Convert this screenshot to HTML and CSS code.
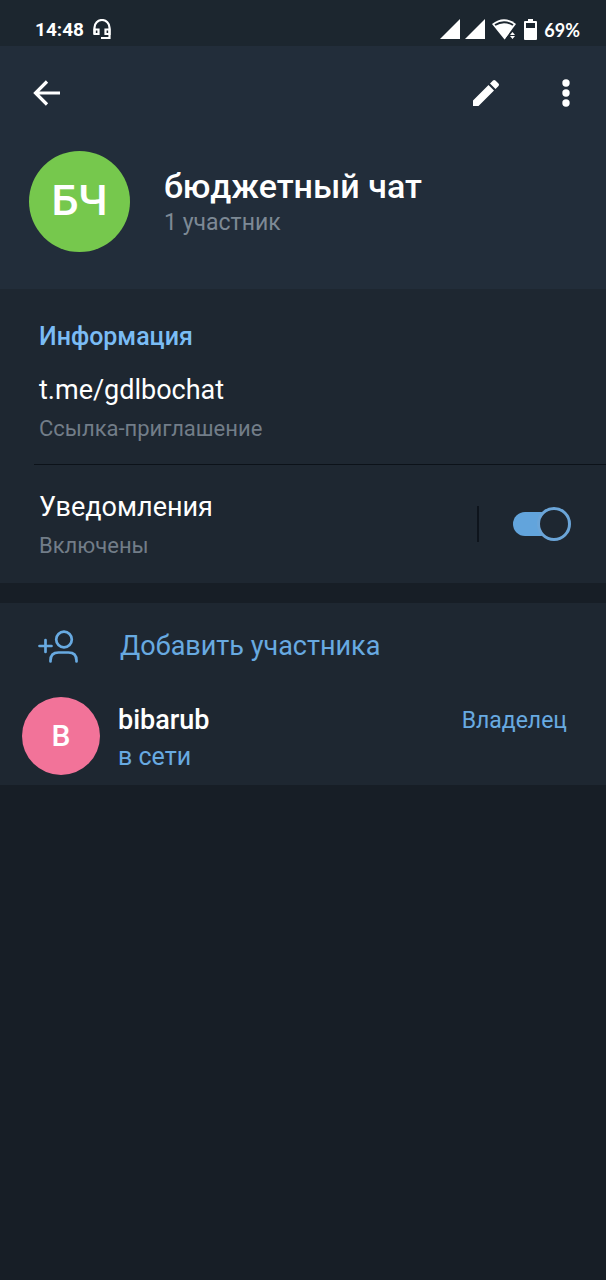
FILE: index.html
```html
<!DOCTYPE html>
<html lang="ru">
<head>
<meta charset="utf-8">
<meta name="viewport" content="width=device-width, initial-scale=1">
<title>бюджетный чат</title>
<link rel="stylesheet" href="styles.css">
</head>
<body>
<div class="status-bar">
  <span class="clock">14:48</span>
  <svg class="headset" width="18" height="21" viewBox="0 0 18 21" fill="none" stroke="#fff" stroke-width="2.200" aria-hidden="true">
    <path d="M1.500 15V8.500a7.300 7.300 0 0 1 15 0v10.500H8"/>
    <path d="M1.500 10.500h4v4.500h-4zM16.500 10.500h-4v4.500h4z"/>
  </svg>
  <div class="indicators">
    <svg width="20" height="20" viewBox="0 0 20 20" fill="#fff" aria-hidden="true"><path d="M0 20L20 0v20z"/></svg>
    <svg width="20" height="20" viewBox="0 0 20 20" fill="#fff" aria-hidden="true"><path d="M0 20L20 0v20z"/></svg>
    <svg class="wifi" width="25" height="21" viewBox="0 0 25 21" aria-hidden="true">
      <path d="M0 5Q12 -4.500 24 5L12.500 20.500z" fill="#fff"/>
      <path d="M3 6Q12 .5 21 6" fill="none" stroke="#1c262f" stroke-width="2"/>
      <path d="M17.500 13h8v8h-8z" fill="#1c262f"/>
      <path d="M12 13h6L12.500 20.500z" fill="#fff"/>
      <path d="M20.500 13l2.500 3h-5zM20.500 20l2.500-3h-5z" fill="#fff"/>
    </svg>
    <svg class="battery" width="13" height="21" viewBox="0 0 13 21" aria-hidden="true">
      <path d="M4 0h5v2h3q1 0 1 1v17q0 1-1 1H1q-1 0-1-1V3q0-1 1-1h3z" fill="#fff"/>
      <path d="M2 4h9v5H2z" fill="#1c262f"/>
    </svg>
    <span class="charge">69%</span>
  </div>
</div>

<header class="header">
  <div class="toolbar">
    <button class="icon-button" type="button" aria-label="Назад">
      <svg width="28" height="26" viewBox="0 0 28 26" fill="none" stroke="#fff" stroke-width="3.200" aria-hidden="true"><path d="M27 13H3M14 1.500L2.500 13L14 24.500"/></svg>
    </button>
    <button class="icon-button edit" type="button" aria-label="Изменить">
      <svg width="28" height="28" viewBox="0 0 28 28" fill="#fff" aria-hidden="true"><path d="M1 21.500L16.500 6l5.500 5.500L6.500 27H1zM18 4.500l3-3q1.200-1.200 2.400 0l3.100 3.100q1.200 1.200 0 2.400l-3 3z"/></svg>
    </button>
    <button class="icon-button" type="button" aria-label="Меню">
      <svg width="8" height="28" viewBox="0 0 8 28" fill="#fff" aria-hidden="true"><circle cx="4" cy="4" r="3.700"/><circle cx="4" cy="14" r="3.700"/><circle cx="4" cy="24" r="3.700"/></svg>
    </button>
  </div>
  <div class="profile">
    <div class="avatar avatar-chat">БЧ</div>
    <div class="profile-text">
      <h1 class="title">бюджетный чат</h1>
      <p class="subtitle">1 участник</p>
    </div>
  </div>
</header>

<main>
  <section class="panel">
    <h2 class="heading">Информация</h2>
    <div class="invite">
      <a class="value" href="#invite">t.me/gdlbochat</a>
      <p class="hint">Ссылка-приглашение</p>
    </div>
    <div class="notifications">
      <label class="notifications-text" for="notify">
        <span class="value">Уведомления</span>
        <span class="hint">Включены</span>
      </label>
      <input class="switch" id="notify" type="checkbox" role="switch" checked>
    </div>
  </section>

  <section class="panel members">
    <button class="add-member" type="button">
      <svg width="41" height="33" viewBox="0 0 41 33" fill="none" stroke="#68aae1" stroke-width="2.700" stroke-linecap="round" aria-hidden="true">
        <path d="M1.500 16h12M7.500 10v12"/>
        <circle cx="26" cy="9.500" r="7.800"/>
        <path d="M12.500 31.500v-1q0-8 8-8h10q8 0 8 8v1"/>
      </svg>
      <span>Добавить участника</span>
    </button>
    <button class="member" type="button">
      <span class="avatar avatar-member">B</span>
      <span class="member-text">
        <span class="member-name">bibarub</span>
        <span class="member-status">в сети</span>
      </span>
      <span class="role">Владелец</span>
    </button>
  </section>
</main>
</body>
</html>
```
FILE: styles.css
```css
* {
  box-sizing: border-box;
}

body {
  margin: 0;
  min-height: 100vh;
  background: #171e26;
  color: #fff;
  font-family: Roboto, "Noto Sans", sans-serif;
  font-size: 27px;
  line-height: 32px;
}

h1, h2, p {
  margin: 0;
}

button {
  padding: 0;
  border: 0;
  background: none;
  color: inherit;
  font: inherit;
  text-align: left;
}

svg {
  display: block;
  flex: none;
}

.status-bar {
  display: flex;
  align-items: center;
  height: 46px;
  padding: 12px 26px 0 35px;
  background: #1c262f;
  font-size: 19px;
  font-weight: 700;
}

.clock {
  padding-top: 1px;
}

.headset {
  margin-left: 9px;
}

.indicators {
  display: flex;
  align-items: center;
  gap: 5px;
  margin-left: auto;
}

.wifi {
  margin-left: 2px;
}

.battery {
  margin-left: 2px;
}

.charge {
  margin-left: 2px;
  padding-top: 2px;
  font-family: Lato, sans-serif;
  font-size: 18px;
}

.header {
  padding-bottom: 37px;
  background: #222d3a;
}

.toolbar {
  display: flex;
  align-items: center;
  height: 94px;
  padding: 0 16px 0 23px;
}

.icon-button {
  display: grid;
  place-items: center;
  width: 48px;
  height: 48px;
}

.edit {
  margin-left: auto;
  margin-right: 32px;
}

.profile {
  display: flex;
  align-items: center;
  gap: 34px;
  padding: 11px 29px 0;
}

.avatar {
  display: grid;
  flex: none;
  place-items: center;
  border-radius: 50%;
  font-weight: 500;
}

.avatar-chat {
  width: 101px;
  height: 101px;
  padding-bottom: 3px;
  background: #76c84d;
  font-size: 43px;
}

.title {
  font-size: 34px;
  font-weight: 500;
  line-height: 42px;
}

.subtitle {
  color: #7d8995;
  font-size: 23px;
}

.panel {
  padding-top: 32px;
  background: #1e2731;
}

.heading {
  padding: 0 39px;
  color: #7abcf5;
  font-size: 25px;
  font-weight: 500;
}

.invite {
  margin-left: 34px;
  padding: 21px 5px 19px;
  border-bottom: 1px solid #0c1219;
}

.value {
  display: block;
  color: #fff;
  text-decoration: none;
}

.hint {
  display: block;
  margin-top: 7px;
  color: #727d88;
  font-size: 22px;
}

.notifications {
  display: flex;
  align-items: flex-start;
  padding: 26px 35px 21px 39px;
}

.notifications-text {
  flex: 1;
}

.switch {
  appearance: none;
  display: flex;
  align-items: center;
  justify-content: flex-end;
  width: 94px;
  height: 36px;
  margin: 15px 0 0;
  border-left: 2px solid #0e141c;
}

.switch::before {
  content: "";
  width: 40px;
  height: 24px;
  margin-right: -16px;
  border-radius: 12px;
  background: #62a4dc;
}

.switch::after {
  content: "";
  box-sizing: border-box;
  width: 34px;
  height: 34px;
  border: 3px solid #6ba5d8;
  border-radius: 50%;
  background: #1e2731;
}

.members {
  margin-top: 20px;
  padding-top: 0;
}

.add-member {
  display: flex;
  align-items: center;
  gap: 41px;
  width: 100%;
  height: 86px;
  padding: 0 38px;
  color: #68aae1;
}

.member {
  display: flex;
  align-items: center;
  gap: 18px;
  width: 100%;
  padding: 8px 39px 10px 22px;
}

.avatar-member {
  width: 78px;
  height: 78px;
  background: #f27399;
  font-size: 30px;
}

.member-text {
  display: grid;
  flex: 1;
  gap: 5px;
  padding-top: 5px;
}

.member-name {
  font-weight: 500;
}

.member-status {
  color: #68aae1;
  font-size: 25px;
}

.role {
  align-self: flex-start;
  padding-top: 8px;
  color: #68aae1;
  font-size: 23px;
}
```
